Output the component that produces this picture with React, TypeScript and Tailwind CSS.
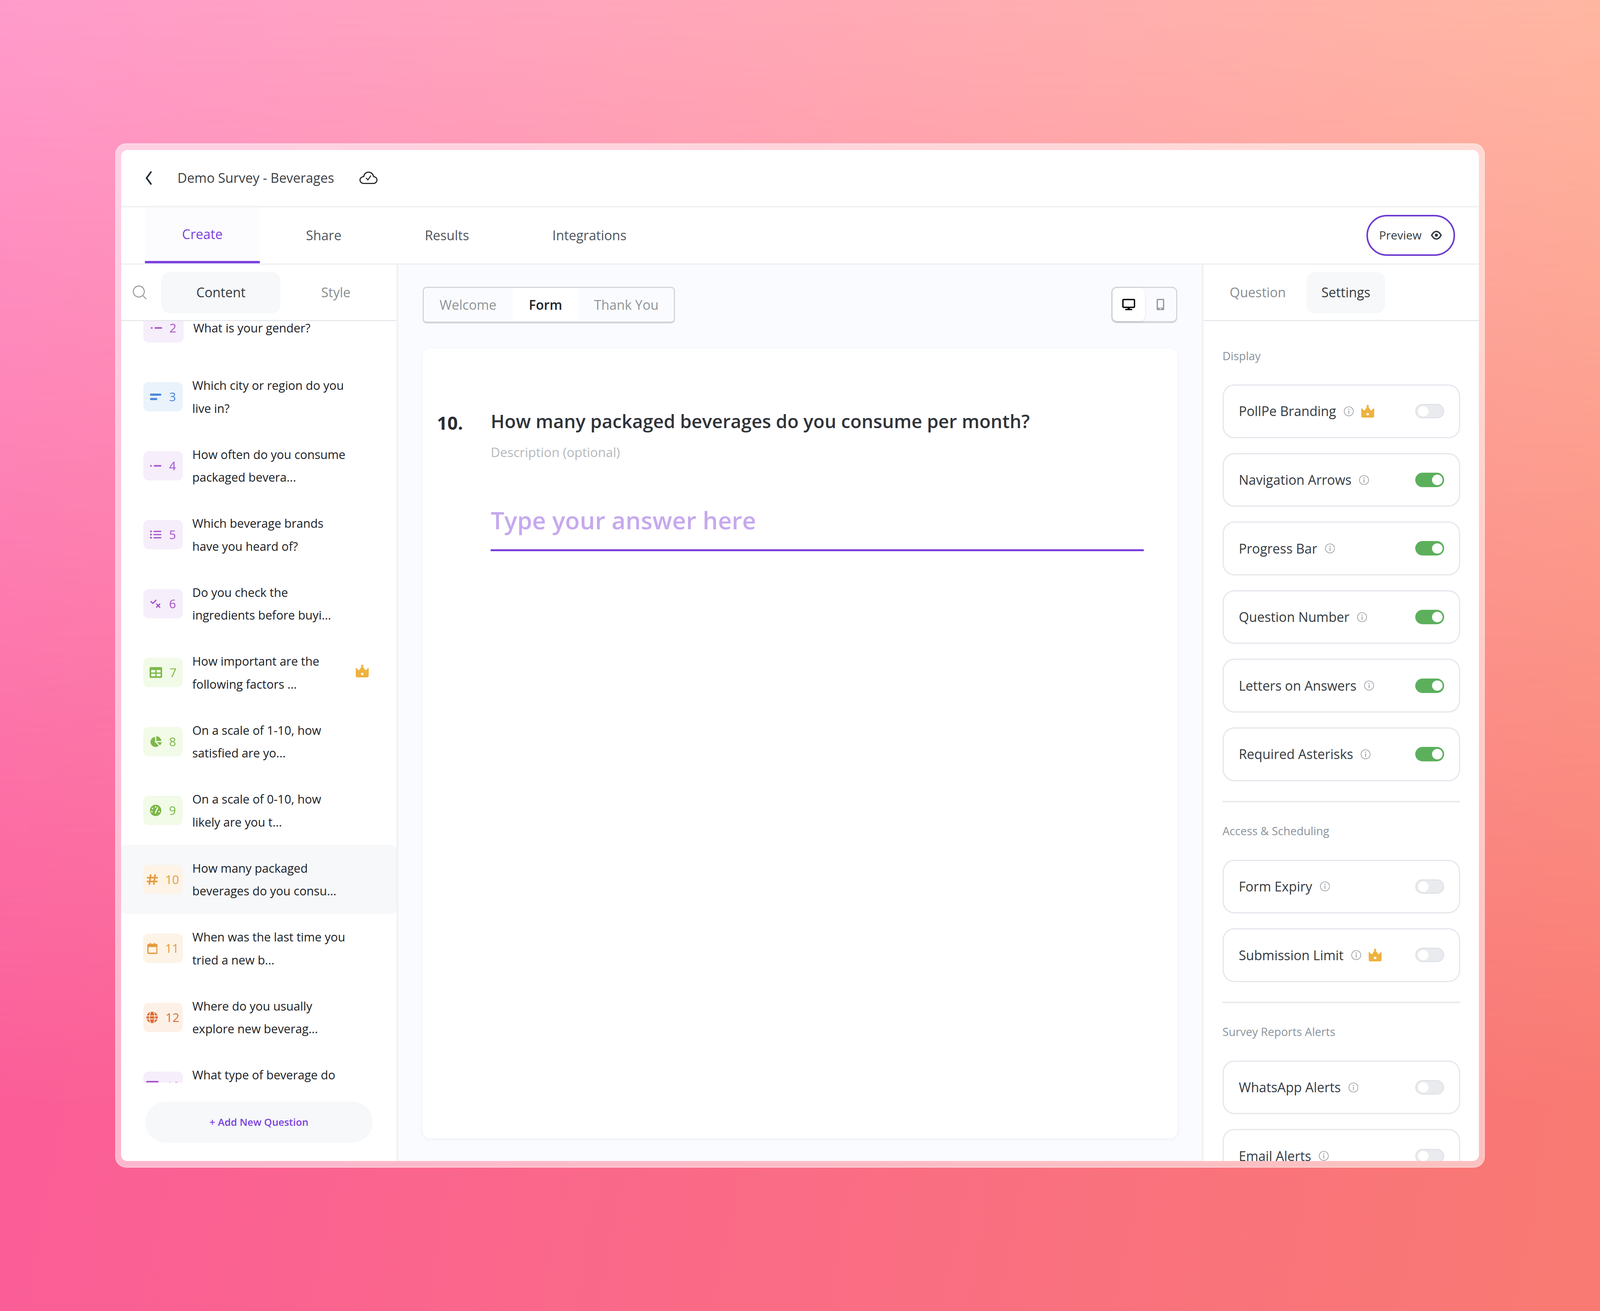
import type { ReactNode } from "react";

const purple = "#a653c9";
const green = "#7db84a";
const orange = "#e59a3f";
const deep = "#dc6a32";
const blue = "#4a88d8";

// widths and type are in vw (1px of the 5088 design = 0.019654vw), heights stay in px
function Svg({ box, className, children }: { box: string; className: string; children: ReactNode }) {
  return (
    <svg viewBox={box} fill="none" className={`h-auto shrink-0 ${className}`}>
      {children}
    </svg>
  );
}

const DotDash = ({ c }: { c: string }) => (
  <Svg box="0 0 36 36" className="w-[0.7075vw]">
    <circle cx="3" cy="18" r="2.8" fill={c} />
    <rect x="12" y="15.5" width="24" height="5" rx="2" fill={c} />
  </Svg>
);
const ShortText = ({ c }: { c: string }) => (
  <Svg box="0 0 36 36" className="w-[0.7075vw]">
    <rect x="0" y="8" width="36" height="7" rx="3" fill={c} />
    <rect x="0" y="22" width="23" height="7" rx="3" fill={c} />
  </Svg>
);
const ListIcon = ({ c }: { c: string }) => (
  <Svg box="0 0 36 36" className="w-[0.7075vw]">
    <circle cx="3" cy="8" r="3" fill={c} />
    <circle cx="3" cy="18" r="3" fill={c} />
    <circle cx="3" cy="28" r="3" fill={c} />
    <rect x="11" y="6" width="25" height="4" rx="1.5" fill={c} />
    <rect x="11" y="16" width="25" height="4" rx="1.5" fill={c} />
    <rect x="11" y="26" width="25" height="4" rx="1.5" fill={c} />
  </Svg>
);
const CheckX = ({ c }: { c: string }) => (
  <Svg box="0 0 36 36" className="w-[0.7075vw]">
    <path d="M3 11 L9 17 L19 7" stroke={c} strokeWidth="4" strokeLinecap="round" strokeLinejoin="round" />
    <path d="M21 19 L31 29 M31 19 L21 29" stroke={c} strokeWidth="4" strokeLinecap="round" />
  </Svg>
);
const TableIcon = ({ c }: { c: string }) => (
  <Svg box="0 0 40 36" className="w-[0.786vw]">
    <rect x="0" y="1" width="40" height="34" rx="4" fill={c} />
    <rect x="5" y="10" width="13" height="8" fill="#f2fae8" />
    <rect x="22" y="10" width="13" height="8" fill="#f2fae8" />
    <rect x="5" y="22" width="13" height="8" fill="#f2fae8" />
    <rect x="22" y="22" width="13" height="8" fill="#f2fae8" />
  </Svg>
);
const PieIcon = ({ c }: { c: string }) => (
  <Svg box="0 0 37 36" className="w-[0.727vw]">
    <path d="M16 3 V19 L28 31 A16 16 0 1 1 16 3 Z" fill={c} />
    <path d="M20 1 A16 16 0 0 1 36 16 H20 Z" fill={c} />
    <path d="M22 20 H37 A17 17 0 0 1 32 30 Z" fill={c} />
  </Svg>
);
const GaugeIcon = ({ c }: { c: string }) => (
  <Svg box="0 0 36 36" className="w-[0.7075vw]">
    <circle cx="18" cy="18" r="18" fill={c} />
    <circle cx="18" cy="7" r="2.4" fill="#f2fae8" />
    <circle cx="8" cy="12" r="2.4" fill="#f2fae8" />
    <circle cx="6" cy="22" r="2.4" fill="#f2fae8" />
    <circle cx="29" cy="22" r="2.4" fill="#f2fae8" />
    <path d="M17 26 L24 10" stroke="#f2fae8" strokeWidth="4" strokeLinecap="round" />
  </Svg>
);
const HashIcon = ({ c }: { c: string }) => (
  <Svg box="0 0 34 34" className="w-[0.668vw]">
    <path d="M12 2 L8 32 M26 2 L22 32 M2 11 H33 M1 23 H32" stroke={c} strokeWidth="5" strokeLinecap="round" />
  </Svg>
);
const CalendarIcon = ({ c }: { c: string }) => (
  <Svg box="0 0 33 36" className="w-[0.649vw]">
    <rect x="2" y="6" width="29" height="28" rx="3" stroke={c} strokeWidth="4" />
    <rect x="2" y="6" width="29" height="8" fill={c} />
    <rect x="8" y="1" width="4" height="7" rx="1.5" fill={c} />
    <rect x="21" y="1" width="4" height="7" rx="1.5" fill={c} />
  </Svg>
);
const GlobeIcon = ({ c }: { c: string }) => (
  <Svg box="0 0 36 36" className="w-[0.7075vw]">
    <circle cx="18" cy="18" r="18" fill={c} />
    <path d="M0 13 H36 M0 23 H36 M13 1 C8 12 8 24 13 35 M23 1 C28 12 28 24 23 35" stroke="#fdf1e7" strokeWidth="2.5" />
  </Svg>
);
const CardIcon = ({ c }: { c: string }) => (
  <Svg box="0 0 40 34" className="w-[0.786vw]">
    <rect x="0" y="0" width="40" height="34" rx="4" fill={c} />
  </Svg>
);

function Crown() {
  return (
    <Svg box="0 0 43 42" className="w-[0.845vw]">
      <path d="M1 10 L11 19 L21.5 4 L32 19 L42 10 L42 36 Q42 41 37 41 L6 41 Q1 41 1 36 Z" fill="#eeb23f" />
      <circle cx="21.5" cy="4" r="3.5" fill="#eeb23f" />
      <circle cx="21.5" cy="30" r="4" fill="#ffffff" />
    </Svg>
  );
}

function Info() {
  return (
    <Svg box="0 0 32 32" className="w-[0.629vw]">
      <circle cx="16" cy="16" r="14.5" stroke="#90969c" strokeWidth="2" />
      <circle cx="16" cy="9.5" r="1.8" fill="#90969c" />
      <rect x="14.8" y="13.5" width="2.4" height="11" fill="#90969c" />
    </Svg>
  );
}

type Question = {
  n: number;
  text: string;
  icon: ReactNode;
  chip: string;
  color: string;
  crown?: boolean;
  active?: boolean;
  wide?: boolean;
};

const questions: Question[] = [
  { n: 2, text: "What is your gender?", icon: <DotDash c={purple} />, chip: "bg-[#f6eefa]", color: "text-[#a653c9]", wide: true },
  { n: 3, text: "Which city or region do you\nlive in?", icon: <ShortText c={blue} />, chip: "bg-[#eaf3fc]", color: "text-[#4a88d8]" },
  { n: 4, text: "How often do you consume\npackaged bevera...", icon: <DotDash c={purple} />, chip: "bg-[#f6eefa]", color: "text-[#a653c9]" },
  { n: 5, text: "Which beverage brands\nhave you heard of?", icon: <ListIcon c={purple} />, chip: "bg-[#f6eefa]", color: "text-[#a653c9]" },
  { n: 6, text: "Do you check the\ningredients before buyi...", icon: <CheckX c={purple} />, chip: "bg-[#f6eefa]", color: "text-[#a653c9]" },
  { n: 7, text: "How important are the\nfollowing factors ...", icon: <TableIcon c={green} />, chip: "bg-[#f2fae8]", color: "text-[#7db84a]", crown: true },
  { n: 8, text: "On a scale of 1-10, how\nsatisfied are yo...", icon: <PieIcon c={green} />, chip: "bg-[#f2fae8]", color: "text-[#7db84a]" },
  { n: 9, text: "On a scale of 0-10, how\nlikely are you t...", icon: <GaugeIcon c={green} />, chip: "bg-[#f2fae8]", color: "text-[#7db84a]" },
  { n: 10, text: "How many packaged\nbeverages do you consu...", icon: <HashIcon c={orange} />, chip: "bg-[#fdf3e7]", color: "text-[#e59a3f]", active: true },
  { n: 11, text: "When was the last time you\ntried a new b...", icon: <CalendarIcon c={orange} />, chip: "bg-[#fdf3e7]", color: "text-[#e59a3f]" },
  { n: 12, text: "Where do you usually\nexplore new beverag...", icon: <GlobeIcon c={deep} />, chip: "bg-[#fdf1e7]", color: "text-[#dc6a32]" },
  { n: 13, text: "What type of beverage do\nyou prefer?", icon: <CardIcon c={purple} />, chip: "bg-[#f6eefa]", color: "text-[#a653c9]" },
];

function QuestionRow({ q }: { q: Question }) {
  return (
    <div className={`flex h-[176.5px] shrink-0 items-center pl-[1.395vw] ${q.active ? "rounded-[14px] bg-[#f6f8fa]" : ""}`}>
      <div className={`flex h-[75px] shrink-0 items-center justify-center gap-[0.472vw] rounded-[14px] ${q.wide ? "w-[2.535vw]" : "w-[2.476vw]"} ${q.chip}`}>
        {q.icon}
        <span className={`text-[0.757vw] leading-none ${q.color}`}>{q.n}</span>
      </div>
      <p className="ml-[0.59vw] flex-1 whitespace-pre-line text-[0.747vw] leading-[58.6px] text-[#1c2024]">{q.text}</p>
      {q.crown && (
        <div className="mr-[1.71vw] -mt-[8px]">
          <Crown />
        </div>
      )}
    </div>
  );
}

function Toggle({ on }: { on?: boolean }) {
  return (
    <div
      className={`flex h-[0.904vw] w-[1.828vw] shrink-0 items-center rounded-full px-[0.118vw] ${
        on ? "justify-end bg-[#5cb05c]" : "justify-start border-[3px] border-[#e0e3e7] bg-[#e9ebee]"
      }`}
    >
      <div className="size-[0.649vw] rounded-full bg-white" />
    </div>
  );
}

function SettingCard({ label, on, crown }: { label: string; on?: boolean; crown?: boolean }) {
  return (
    <div className="flex h-[137.6px] shrink-0 items-center rounded-[30px] border-[3px] border-[#e4e7ec] bg-white pl-[0.943vw] pr-[0.924vw]">
      <span className="text-[0.8255vw] font-medium text-[#343a40]">{label}</span>
      <div className="ml-[0.472vw]">
        <Info />
      </div>
      {crown && (
        <div className="ml-[0.452vw]">
          <Crown />
        </div>
      )}
      <div className="ml-auto">
        <Toggle on={on} />
      </div>
    </div>
  );
}

function SectionLabel({ children, className }: { children: ReactNode; className: string }) {
  return <p className={`text-[0.7075vw] font-medium leading-[48px] text-[#8a929c] ${className}`}>{children}</p>;
}

export default function App() {
  return (
    <div className="relative flex h-screen w-screen overflow-hidden bg-[linear-gradient(100deg,#fb5a9c,#f97a72)] px-[7.213vw] py-[367px] font-['Open_Sans',sans-serif]">
      <div className="absolute inset-0 bg-[linear-gradient(100deg,#ff9ccb,#ffbb9c)] [mask-image:linear-gradient(to_bottom,black,transparent_85%)]" />
      <div className="relative flex min-w-0 flex-1 rounded-[28px] border-[2px] border-white/30 bg-white/55 px-[0.295vw] py-[15px]">
        <div className="flex min-w-0 flex-1 flex-col overflow-hidden rounded-[16px] bg-white">
          {/* top bar */}
          <header className="flex h-[147px] shrink-0 items-center border-b-4 border-[#f0f2f4] pl-[1.533vw]">
            <Svg box="0 0 22 44" className="w-[0.432vw]">
              <path d="M18 3 L4 22 L18 41" stroke="#1f2a37" strokeWidth="5" strokeLinecap="round" strokeLinejoin="round" />
            </Svg>
            <h1 className="ml-[1.572vw] text-[0.8255vw] font-medium text-[#3a3f45]">Demo Survey - Beverages</h1>
            <Svg box="0 0 58 40" className="ml-[1.592vw] w-[1.14vw]">
              <path
                d="M13 38 H45 C52 38 56 32 56 27 C56 21 51 17 45 16 C44 8 37 2 29 2 C21 2 15 8 14 16 C7 17 2 21 2 27 C2 33 7 38 13 38 Z"
                stroke="#1c2024"
                strokeWidth="3.5"
              />
              <path d="M22 21 L27 27 L36 14" stroke="#1c2024" strokeWidth="3" strokeLinecap="round" strokeLinejoin="round" />
            </Svg>
          </header>

          {/* main tabs */}
          <nav className="flex h-[147px] shrink-0 items-stretch gap-[0.55vw] border-b-4 border-[#f0f2f4] pl-[1.494vw] pr-[1.513vw]">
            <a className="flex items-center border-b-[6px] border-[#7a3fe0] bg-[#fcfcff] px-[2.329vw] text-[0.8255vw] font-medium text-[#7a3fe0]">Create</a>
            <a className="flex items-center px-[2.329vw] text-[0.8255vw] font-medium text-[#50565c]">Share</a>
            <a className="flex items-center px-[2.329vw] text-[0.8255vw] font-medium text-[#50565c]">Results</a>
            <a className="flex items-center px-[2.329vw] text-[0.8255vw] font-medium text-[#50565c]">Integrations</a>
            <div className="ml-auto flex items-center">
              <button className="flex h-[105px] w-[5.542vw] items-center justify-center gap-[0.59vw] rounded-full border-[4px] border-[#6d3bd0] text-[0.727vw] font-medium text-[#343a40]">
                Preview
                <Svg box="0 0 35 30" className="w-[0.688vw]">
                  <path d="M2.5 15 C7 7 12 3 17.5 3 C23 3 28 7 32.5 15 C28 23 23 27 17.5 27 C12 27 7 23 2.5 15 Z" stroke="#343a40" strokeWidth="4.5" />
                  <circle cx="17.5" cy="15" r="5" fill="#343a40" />
                </Svg>
              </button>
            </div>
          </nav>

          <div className="flex min-h-0 flex-1">
            {/* question list */}
            <aside className="flex w-[17.315vw] shrink-0 flex-col border-r-4 border-[#f0f1f3]">
              <div className="flex h-[144px] shrink-0 items-center border-b-[3px] border-[#e6e8ec] pl-[0.747vw]">
                <Svg box="0 0 44 44" className="w-[0.865vw]">
                  <circle cx="19" cy="19" r="17.5" stroke="#8a9096" strokeWidth="2.8" />
                  <path d="M33 33 L43 43" stroke="#8a9096" strokeWidth="2.5" strokeLinecap="round" />
                </Svg>
                <div className="ml-[0.924vw] flex h-[106px] w-[7.429vw] items-center justify-center rounded-[22px] bg-[#f6f8fa] text-[0.8255vw] font-medium text-[#343a40]">Content</div>
                <div className="ml-[2.555vw] text-[0.8255vw] text-[#878d93]">Style</div>
              </div>
              <div className="min-h-0 flex-1 overflow-hidden">
                <div className="-mt-[71px] flex flex-col">
                  {questions.map((q) => (
                    <QuestionRow key={q.n} q={q} />
                  ))}
                </div>
              </div>
              <div className="flex h-[201px] shrink-0 items-start pl-[1.533vw] pt-[49px]">
                <button className="h-[105px] w-[14.19vw] rounded-full bg-[#f6f8fa] text-[0.629vw] font-semibold text-[#7a3fe0]">+ Add New Question</button>
              </div>
            </aside>

            {/* form preview */}
            <main className="flex min-w-0 flex-1 flex-col bg-[#f9fbfe] px-[1.533vw] pb-[58px] pt-[56px]">
              <div className="flex h-[94px] shrink-0 items-start justify-between">
                <div className="flex h-[94px] items-stretch rounded-[10px] border-x-[3px] border-b-[5px] border-t-[3px] border-[#d3d6db] text-[0.8255vw]">
                  <div className="flex w-[5.542vw] items-center justify-center text-[#8f9499]">Welcome</div>
                  <div className="flex w-[4.147vw] items-center justify-center bg-white font-semibold text-[#22262a]">Form</div>
                  <div className="flex w-[5.955vw] items-center justify-center text-[#8f9499]">Thank You</div>
                </div>
                <div className="flex h-[93px] w-[4.147vw] items-stretch rounded-[14px] border-[3px] border-b-[5px] border-[#d3d6db]">
                  <div className="flex w-[2.024vw] items-center justify-center rounded-[14px] bg-white shadow-[0_2px_6px_rgba(0,0,0,0.1)]">
                    <Svg box="0 0 41 36" className="w-[0.806vw]">
                      <rect x="2" y="2" width="37" height="25" rx="3" stroke="#000" strokeWidth="4.5" />
                      <rect x="17" y="27" width="7" height="6" fill="#000" />
                      <rect x="9" y="32" width="23" height="4" rx="2" fill="#000" />
                    </Svg>
                  </div>
                  <div className="flex flex-1 items-center justify-center">
                    <Svg box="0 0 24 36" className="w-[0.472vw]">
                      <rect width="24" height="36" rx="4" fill="#96999d" />
                      <rect x="4" y="4" width="16" height="24" fill="#f9fbfe" />
                      <rect x="9" y="30" width="6" height="3" fill="#f9fbfe" />
                    </Svg>
                  </div>
                </div>
              </div>
              <section className="mt-[64px] flex-1 rounded-[18px] bg-white px-[0.904vw] pt-[150px] shadow-[0_2px_8px_rgba(20,30,60,0.06)]">
                <div className="flex items-start">
                  <span className="w-[3.361vw] shrink-0 text-[1.14vw] font-bold leading-[80px] text-[#2a2e33]">10.</span>
                  <div className="min-w-0 flex-1 pr-[1.219vw]">
                    <h2 className="-mt-[4px] text-[1.153vw] font-semibold leading-[80px] text-[#2f3338]">How many packaged beverages do you consume per month?</h2>
                    <p className="mt-[10px] text-[0.806vw] leading-[60px] text-[#b5b8bc]">Description (optional)</p>
                    <div className="mt-[88px] border-b-[5px] border-[#7a3fdc] pb-[20px] text-[1.503vw] font-semibold leading-[110px] text-[#c6a9ee]">Type your answer here</div>
                  </div>
                </div>
              </section>
            </main>

            {/* settings */}
            <aside className="flex w-[17.315vw] shrink-0 flex-col border-l-4 border-[#f0f1f3]">
              <div className="flex h-[144px] shrink-0 items-center gap-[0.373vw] border-b-[3px] border-[#e6e8ec] pl-[0.708vw]">
                <div className="px-[0.924vw] text-[0.8255vw] text-[#878d93]">Question</div>
                <div className="flex h-[106px] items-center rounded-[22px] bg-[#f6f8fa] px-[0.924vw] text-[0.8255vw] font-medium text-[#343a40]">Settings</div>
              </div>
              <div className="min-h-0 flex-1 overflow-hidden px-[1.179vw] pt-[65px]">
                <SectionLabel className="mb-[49px]">Display</SectionLabel>
                <div className="flex flex-col gap-[38px]">
                  <SettingCard label="PollPe Branding" crown />
                  <SettingCard label="Navigation Arrows" on />
                  <SettingCard label="Progress Bar" on />
                  <SettingCard label="Question Number" on />
                  <SettingCard label="Letters on Answers" on />
                  <SettingCard label="Required Asterisks" on />
                </div>
                <div className="mt-[50px] h-[4px] bg-[#e8eaee]" />
                <SectionLabel className="mb-[50px] mt-[49px]">Access &amp; Scheduling</SectionLabel>
                <div className="flex flex-col gap-[38px]">
                  <SettingCard label="Form Expiry" />
                  <SettingCard label="Submission Limit" crown />
                </div>
                <div className="mt-[50px] h-[4px] bg-[#e8eaee]" />
                <SectionLabel className="mb-[50px] mt-[49px]">Survey Reports Alerts</SectionLabel>
                <div className="flex flex-col gap-[38px]">
                  <SettingCard label="WhatsApp Alerts" />
                  <SettingCard label="Email Alerts" />
                </div>
              </div>
            </aside>
          </div>
        </div>
      </div>
    </div>
  );
}
